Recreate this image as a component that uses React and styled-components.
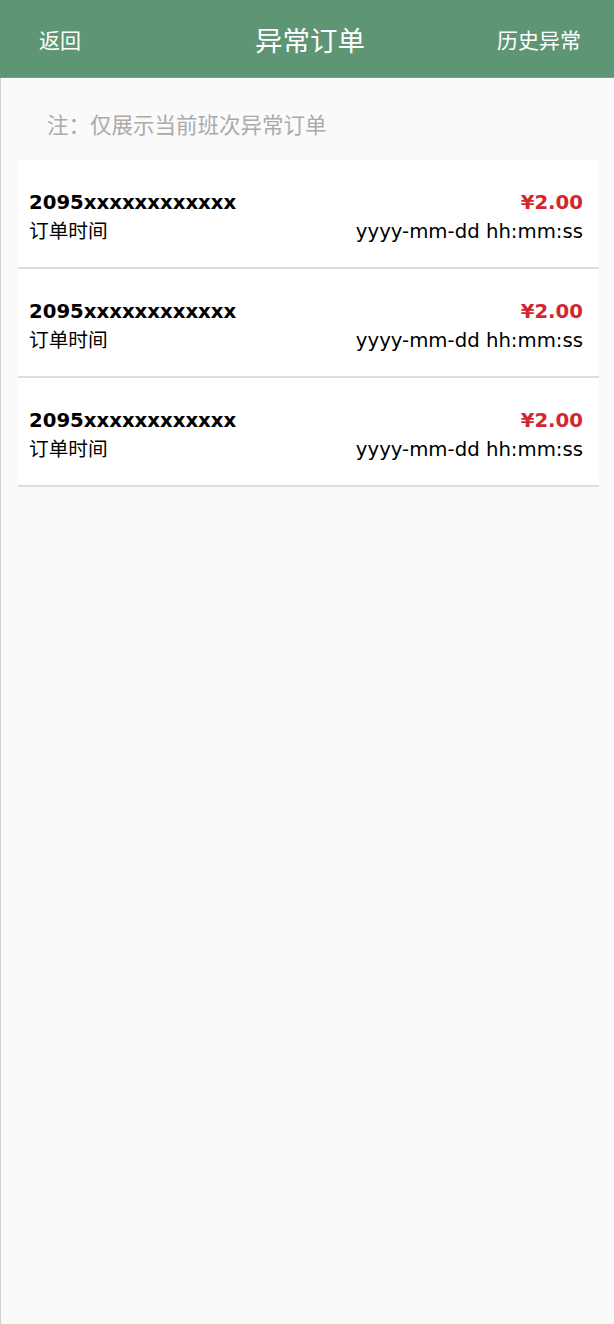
import React from "react"
import styled, { createGlobalStyle } from "styled-components"

const GlobalStyle = createGlobalStyle`
    html, body {
        margin: 0;
        padding: 0;
        background: #fafafa;
    }
    body {
        font-family: "DejaVu Sans", "Noto Sans CJK SC", sans-serif;
    }
`

const Page = styled.div`
    min-height: 1324px;
    display: flex;
    flex-direction: column;
    background: #fafafa;
`

const Header = styled.header`
    height: 77px;
    background: #5e9574;
    border-bottom: 1px solid #6fa283;
    display: grid;
    grid-template-columns: 1fr auto 1fr;
    align-items: center;
    padding: 0 33px 0 39px;
    color: #fff;
    font-family: "Noto Sans CJK SC", sans-serif;
`

const SideLink = styled.span`
    font-size: 21px;
    justify-self: ${p => (p.$right ? "end" : "start")};
`

const Title = styled.h1`
    margin: 0;
    font-size: 27.5px;
    font-weight: 400;
`

const Body = styled.main`
    flex: 1;
    border-left: 1px solid #d0d0d0;
    padding: 0 15px 0 17px;
`

const Note = styled.p`
    margin: 0;
    padding: 30px 0 0 29px;
    height: 82px;
    box-sizing: border-box;
    font-size: 21.5px;
    color: #aaa;
    font-family: "Noto Sans CJK SC", sans-serif;
`

const OrderList = styled.ul`
    list-style: none;
    margin: 0;
    padding: 0;
`

const OrderItem = styled.li`
    background: #fff;
    height: 109px;
    border-bottom: 2px solid #ddd;
    padding: 29px 16px 0 11px;
    box-sizing: border-box;
    display: flex;
    flex-direction: column;
    gap: 2px;
`

const Row = styled.div`
    display: flex;
    justify-content: space-between;
    align-items: center;
    line-height: 27px;
    font-size: 19.7px;
    font-weight: ${p => (p.$strong ? 700 : 400)};
    color: #000;
`

const Price = styled.span`
    color: #d0282e;
`

const orders = [
    { id: 1, no: "2095xxxxxxxxxxxx", price: "¥2.00", time: "yyyy-mm-dd hh:mm:ss" },
    { id: 2, no: "2095xxxxxxxxxxxx", price: "¥2.00", time: "yyyy-mm-dd hh:mm:ss" },
    { id: 3, no: "2095xxxxxxxxxxxx", price: "¥2.00", time: "yyyy-mm-dd hh:mm:ss" },
]

export default function App() {
    return (
        <>
            <GlobalStyle />
            <Page>
                <Header>
                    <SideLink>返回</SideLink>
                    <Title>异常订单</Title>
                    <SideLink $right>历史异常</SideLink>
                </Header>
                <Body>
                    <Note>注：仅展示当前班次异常订单</Note>
                    <OrderList>
                        {orders.map(o => (
                            <OrderItem key={o.id}>
                                <Row $strong>
                                    <span>{o.no}</span>
                                    <Price>{o.price}</Price>
                                </Row>
                                <Row>
                                    <span>订单时间</span>
                                    <span>{o.time}</span>
                                </Row>
                            </OrderItem>
                        ))}
                    </OrderList>
                </Body>
            </Page>
        </>
    )
}
